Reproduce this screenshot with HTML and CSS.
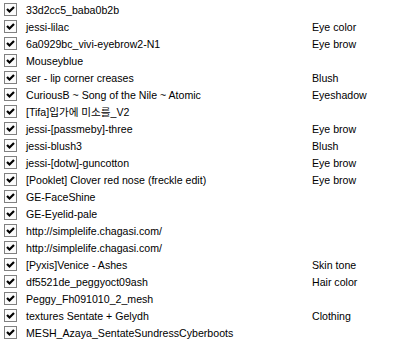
FILE: index.html
```html
<!DOCTYPE html>
<html lang="en">
<head>
    <meta charset="UTF-8">
    <title>Items</title>
    <link rel="stylesheet" href="styles.css">
</head>
<body>

<ul class="item-list">
    <li class="item"><span class="check"><svg viewBox="0 0 11 11"><polyline points="2,5 4.5,7.5 9,3"/></svg></span><span class="name">33d2cc5_baba0b2b</span><span class="cat"></span></li>
    <li class="item"><span class="check"><svg viewBox="0 0 11 11"><polyline points="2,5 4.5,7.5 9,3"/></svg></span><span class="name">jessi-lilac</span><span class="cat">Eye color</span></li>
    <li class="item"><span class="check"><svg viewBox="0 0 11 11"><polyline points="2,5 4.5,7.5 9,3"/></svg></span><span class="name">6a0929bc_vivi-eyebrow2-N1</span><span class="cat">Eye brow</span></li>
    <li class="item"><span class="check"><svg viewBox="0 0 11 11"><polyline points="2,5 4.5,7.5 9,3"/></svg></span><span class="name">Mouseyblue</span><span class="cat"></span></li>
    <li class="item"><span class="check"><svg viewBox="0 0 11 11"><polyline points="2,5 4.5,7.5 9,3"/></svg></span><span class="name">ser - lip corner creases</span><span class="cat">Blush</span></li>
    <li class="item"><span class="check"><svg viewBox="0 0 11 11"><polyline points="2,5 4.5,7.5 9,3"/></svg></span><span class="name">CuriousB ~ Song of the Nile ~ Atomic</span><span class="cat">Eyeshadow</span></li>
    <li class="item"><span class="check"><svg viewBox="0 0 11 11"><polyline points="2,5 4.5,7.5 9,3"/></svg></span><span class="name">[Tifa]입가에 미소를_V2</span><span class="cat"></span></li>
    <li class="item"><span class="check"><svg viewBox="0 0 11 11"><polyline points="2,5 4.5,7.5 9,3"/></svg></span><span class="name">jessi-[passmeby]-three</span><span class="cat">Eye brow</span></li>
    <li class="item"><span class="check"><svg viewBox="0 0 11 11"><polyline points="2,5 4.5,7.5 9,3"/></svg></span><span class="name">jessi-blush3</span><span class="cat">Blush</span></li>
    <li class="item"><span class="check"><svg viewBox="0 0 11 11"><polyline points="2,5 4.5,7.5 9,3"/></svg></span><span class="name">jessi-[dotw]-guncotton</span><span class="cat">Eye brow</span></li>
    <li class="item"><span class="check"><svg viewBox="0 0 11 11"><polyline points="2,5 4.5,7.5 9,3"/></svg></span><span class="name">[Pooklet] Clover red nose (freckle edit)</span><span class="cat">Eye brow</span></li>
    <li class="item"><span class="check"><svg viewBox="0 0 11 11"><polyline points="2,5 4.5,7.5 9,3"/></svg></span><span class="name">GE-FaceShine</span><span class="cat"></span></li>
    <li class="item"><span class="check"><svg viewBox="0 0 11 11"><polyline points="2,5 4.5,7.5 9,3"/></svg></span><span class="name">GE-Eyelid-pale</span><span class="cat"></span></li>
    <li class="item"><span class="check"><svg viewBox="0 0 11 11"><polyline points="2,5 4.5,7.5 9,3"/></svg></span><span class="name">http://simplelife.chagasi.com/</span><span class="cat"></span></li>
    <li class="item"><span class="check"><svg viewBox="0 0 11 11"><polyline points="2,5 4.5,7.5 9,3"/></svg></span><span class="name">http://simplelife.chagasi.com/</span><span class="cat"></span></li>
    <li class="item"><span class="check"><svg viewBox="0 0 11 11"><polyline points="2,5 4.5,7.5 9,3"/></svg></span><span class="name">[Pyxis]Venice - Ashes</span><span class="cat">Skin tone</span></li>
    <li class="item"><span class="check"><svg viewBox="0 0 11 11"><polyline points="2,5 4.5,7.5 9,3"/></svg></span><span class="name">df5521de_peggyoct09ash</span><span class="cat">Hair color</span></li>
    <li class="item"><span class="check"><svg viewBox="0 0 11 11"><polyline points="2,5 4.5,7.5 9,3"/></svg></span><span class="name">Peggy_Fh091010_2_mesh</span><span class="cat"></span></li>
    <li class="item"><span class="check"><svg viewBox="0 0 11 11"><polyline points="2,5 4.5,7.5 9,3"/></svg></span><span class="name">textures Sentate + Gelydh</span><span class="cat">Clothing</span></li>
    <li class="item"><span class="check"><svg viewBox="0 0 11 11"><polyline points="2,5 4.5,7.5 9,3"/></svg></span><span class="name">MESH_Azaya_SentateSundressCyberboots</span><span class="cat"></span></li>
</ul>

</body>
</html>
```

FILE: styles.css
```css
body {
    margin: 0;
    background-color: #fff;
    font-family: "Liberation Sans", "Noto Sans CJK KR", sans-serif;
    font-size: 10.6px;
    color: #000;
}

.item-list {
    list-style: none;
    margin: 0;
    padding: 1px 0 0 0;
}

.item {
    display: flex;
    align-items: center;
    height: 17px;
}

.check {
    display: flex;
    align-items: center;
    justify-content: center;
    width: 11px;
    height: 11px;
    margin-left: 4px;
    border: 1px solid #808080;
    background-color: #fbfbfb;
    flex-shrink: 0;
}

.check svg {
    width: 11px;
    height: 11px;
}

.check polyline {
    fill: none;
    stroke: #000;
    stroke-width: 2.2;
}

.name {
    width: 286px;
    margin-left: 9px;
    white-space: nowrap;
}

.cat {
    white-space: nowrap;
}
```
